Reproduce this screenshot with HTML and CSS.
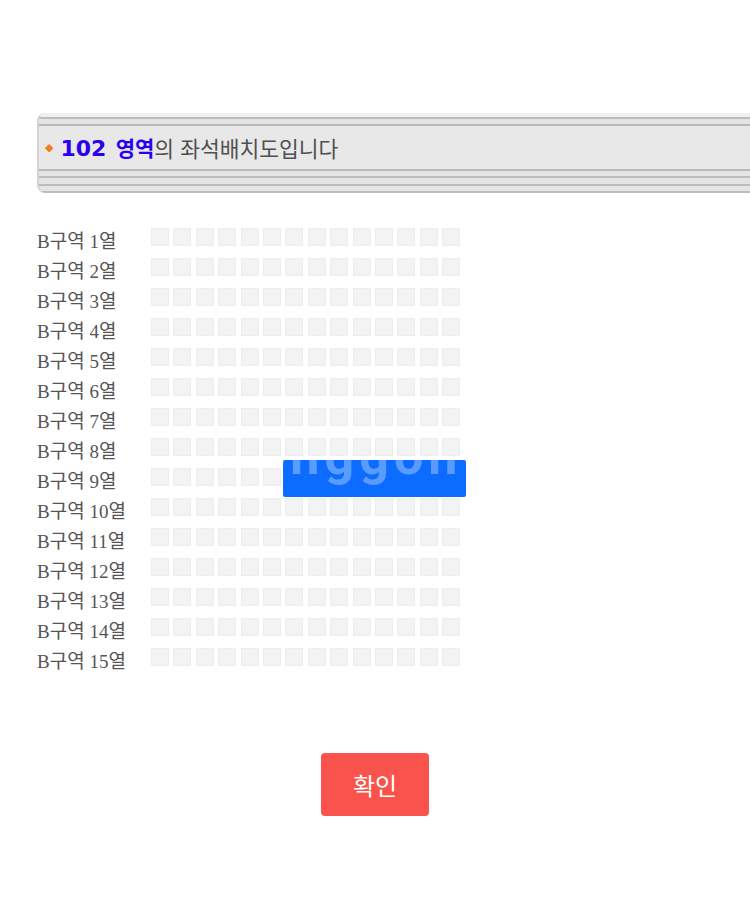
FILE: index.html
```html
<!DOCTYPE html>
<html lang="ko">
<head>
<meta charset="UTF-8">
<meta name="viewport" content="width=device-width, initial-scale=1.0">
<title>좌석배치도</title>
<link rel="stylesheet" href="styles.css">
</head>
<body>

<div class="title-bar">
    <span class="dot">◆</span>
    <span class="zone"><b>102</b> 영역</span><span class="title-rest">의 좌석배치도입니다</span>
</div>

<div class="seat-map" id="seatMap">
    <div class="watermark"><span>onggon</span></div>
</div>

<div class="controls">
    <button class="confirm">확인</button>
</div>

<script>
const map = document.getElementById('seatMap');
for (let r = 1; r <= 15; r++) {
    let row = document.createElement('div');
    row.className = 'seat-row';
    let label = document.createElement('div');
    label.className = 'row-label';
    label.innerText = 'B구역 ' + r + '열';
    row.appendChild(label);
    let seats = document.createElement('div');
    seats.className = 'seats';
    for (let s = 0; s < 14; s++) {
        let seat = document.createElement('span');
        seat.className = 'seat';
        seats.appendChild(seat);
    }
    row.appendChild(seats);
    map.insertBefore(row, map.lastElementChild);
}
</script>

</body>
</html>
```

FILE: styles.css
```css
body {
    margin: 0;
    background: #fff;
    font-family: "Liberation Serif", "Noto Sans CJK KR", serif;
}
.title-bar {
    margin-top: 113px;
    margin-left: 37px;
    height: 80px;
    display: flex;
    align-items: center;
    padding-left: 6px;
    padding-bottom: 12px;
    box-sizing: border-box;
    border-left: 2px solid #d4d4d4;
    border-radius: 8px 0 0 8px;
    background: linear-gradient(to bottom,
        #f0f0f0 0, #f0f0f0 4px,
        #bcbcbc 4px, #bcbcbc 6px,
        #e4e4e4 6px, #e4e4e4 11px,
        #b6b6b6 11px, #b6b6b6 13px,
        #e8e8e8 13px, #e8e8e8 56px,
        #b8b8b8 56px, #b8b8b8 58px,
        #e4e4e4 58px, #e4e4e4 63px,
        #bcbcbc 63px, #bcbcbc 65px,
        #e4e4e4 65px, #e4e4e4 71px,
        #bcbcbc 71px, #bcbcbc 73px,
        #e4e4e4 73px, #e4e4e4 78px,
        #bcbcbc 78px, #bcbcbc 80px);
}
.dot {
    color: #f47a20;
    font-size: 11px;
    font-family: "DejaVu Sans", sans-serif;
    margin-right: 7px;
}
.zone {
    color: #2a00f0;
    font-size: 21px;
    font-weight: bold;
    font-family: "DejaVu Sans", "Noto Sans CJK KR", sans-serif;
}
.zone b {
    font-size: 22px;
    margin-right: 2px;
}
.title-rest {
    color: #505050;
    font-size: 21.5px;
    font-family: "Noto Sans CJK KR", sans-serif;
}
.seat-map {
    position: relative;
    margin-top: 29px;
    margin-left: 37px;
}
.seat-row {
    display: flex;
    align-items: center;
    height: 30px;
}
.row-label {
    width: 114px;
    font-size: 19px;
    color: #555;
    padding-top: 4px;
}
.seats {
    display: flex;
    gap: 4.4px;
}
.seat {
    width: 18px;
    height: 18px;
    box-sizing: border-box;
    background: #f3f3f3;
    border: 1px solid #ededed;
}
.watermark {
    position: absolute;
    left: 246px;
    top: 238px;
    width: 183px;
    height: 37px;
    background: #0b6cff;
    border-radius: 2px;
    overflow: hidden;
}
.watermark span {
    position: absolute;
    left: -27px;
    top: -29px;
    font-family: Roboto, sans-serif;
    font-weight: bold;
    font-size: 52px;
    line-height: 1;
    color: #5a9bff;
    letter-spacing: 5px;
    white-space: nowrap;
}
.controls {
    text-align: center;
    margin-top: 81px;
}
.confirm {
    width: 108px;
    height: 63px;
    border: none;
    border-radius: 4px;
    background: #fa524d;
    color: #fff;
    font-family: "Noto Sans CJK KR", sans-serif;
    font-size: 24px;
}
```
